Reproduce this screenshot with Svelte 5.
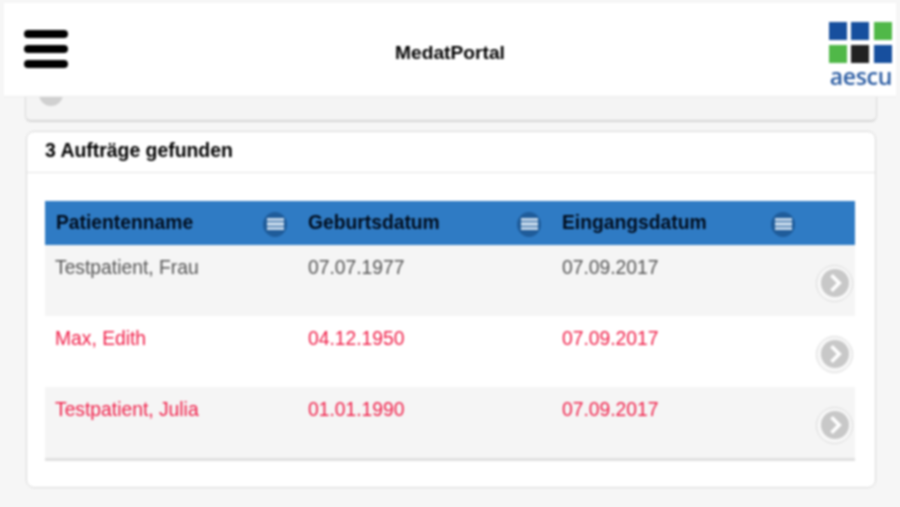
<script>
  const columns = ['Patientenname', 'Geburtsdatum', 'Eingangsdatum'];
  const orders = [
    { name: 'Testpatient, Frau', born: '07.07.1977', received: '07.09.2017', urgent: false },
    { name: 'Max, Edith', born: '04.12.1950', received: '07.09.2017', urgent: true },
    { name: 'Testpatient, Julia', born: '01.01.1990', received: '07.09.2017', urgent: true }
  ];
  const logo = ['#174f9e', '#174f9e', '#50b848', '#50b848', '#222222', '#174f9e'];
</script>

<div class="page">
  <header class="topbar">
    <div class="burger"><span></span><span></span><span></span></div>
    <h1>MedatPortal</h1>
    <div class="logo">
      <div class="squares">
        {#each logo as colour}
          <i style="background: {colour}"></i>
        {/each}
      </div>
      <span>aescu</span>
    </div>
  </header>

  <div class="content">
    <div class="search-card">
      <div class="stub"></div>
    </div>

    <section class="card">
      <h2>3 Aufträge gefunden</h2>
      <div class="card-body">
        <div class="table">
          <div class="row head">
            {#each columns as column}
              <div class="cell">
                <span>{column}</span>
                <b class="sort"><i></i><i></i><i></i></b>
              </div>
            {/each}
          </div>
          {#each orders as order, index}
            <div class="row" class:odd={index % 2 === 0} class:urgent={order.urgent}>
              <div class="cell">{order.name}</div>
              <div class="cell">{order.born}</div>
              <div class="cell">{order.received}</div>
              <div class="go">
                <svg viewBox="0 0 20 20" width="20" height="20">
                  <path d="M7.5 4.5 13 10l-5.500 5.500" fill="none" stroke="#fff" stroke-width="2.600" />
                </svg>
              </div>
            </div>
          {/each}
        </div>
      </div>
    </section>
  </div>
</div>

<style>
  :global(body) {
    margin: 0;
    background: #f6f6f6;
  }

  * {
    box-sizing: border-box;
  }

  .page {
    width: 900px;
    height: 507px;
    overflow: hidden;
    padding-top: 3px;
    font-family: "Liberation Sans", Arial, sans-serif;
    filter: blur(0.8px);
  }

  .topbar {
    position: relative;
    z-index: 1;
    height: 94px;
    margin: 0 4px;
    background: #fff;
    border-bottom: 1px solid #ececec;
    display: flex;
    align-items: center;
    justify-content: space-between;
    padding: 0 4px 0 20px;
  }

  .burger {
    width: 44px;
    display: flex;
    flex-direction: column;
    gap: 7px;
    margin-top: -2px;
  }

  .burger span {
    height: 8px;
    background: #000;
    border-radius: 4px;
  }

  h1 {
    margin: 7px 0 0 4px;
    font-size: 19.200px;
    font-weight: bold;
    color: #000;
  }

  .logo {
    width: 64px;
    margin-top: 11px;
    display: flex;
    flex-direction: column;
    align-items: flex-end;
  }

  .squares {
    display: grid;
    grid-template-columns: repeat(3, 18px);
    gap: 4.500px;
  }

  .squares i {
    height: 18px;
  }

  .logo span {
    margin-top: 2px;
    font-size: 23px;
    line-height: 23px;
    font-weight: 600;
    color: #2c5da3;
    letter-spacing: -0.3px;
    font-family: "Open Sans", sans-serif;
  }

  .content {
    padding: 0 24px 0 25px;
  }

  .search-card {
    height: 25px;
    margin-right: -1px;
    background: #f4f4f4;
    border: 1px solid #d8d8d8;
    border-top: 0;
    border-bottom: 2px solid #d6d6d6;
    border-radius: 0 0 6px 6px;
    padding-left: 13px;
    overflow: hidden;
  }

  .stub {
    width: 24px;
    height: 24px;
    margin-top: -15px;
    border-radius: 50%;
    background: #d0d0d0;
  }

  .card {
    margin: 9px 0 0 1px;
    height: 357px;
    background: #fff;
    border: 1px solid #d8d8d8;
    border-radius: 8px;
  }

  h2 {
    margin: 0;
    height: 41px;
    padding: 8px 18px 0;
    font-size: 19.400px;
    line-height: 20px;
    font-weight: bold;
    color: #000;
    border-bottom: 1px solid #e4e4e4;
  }

  .card-body {
    padding: 28px 20px 0 18px;
  }

  .table {
    border-bottom: 3px solid #e0e0e0;
  }

  .row {
    position: relative;
    height: 71px;
    display: grid;
    grid-template-columns: 253px 254px 254px 49px;
    background: #fff;
    color: #f01e48;
    font-size: 19.300px;
  }

  .row.odd {
    background: #f5f5f5;
  }

  .row:not(.urgent) {
    color: #555;
  }

  .row.head {
    height: 44px;
    background: #2f7bc4;
    color: #000c1c;
    font-weight: bold;
    align-items: center;
  }

  .cell {
    padding: 13px 0 0 10px;
    line-height: 20px;
  }

  .head .cell {
    padding: 0 0 0 10px;
    display: flex;
    align-items: center;
    justify-content: space-between;
  }

  .head .cell:first-child {
    padding-left: 11px;
  }

  .head .cell span {
    margin-top: -1px;
  }

  .sort {
    width: 24px;
    height: 25px;
    margin: 2px 11px 0 0;
    border-radius: 50%;
    background: #1f5c9a;
    display: flex;
    flex-direction: column;
    justify-content: center;
    align-items: center;
    gap: 1px;
  }

  .sort i {
    width: 17px;
    height: 3.500px;
    background: #c4d7ea;
  }

  .go {
    position: absolute;
    right: 2px;
    top: 19.500px;
    width: 37px;
    height: 37px;
    border-radius: 50%;
    background: #f8f8f8;
    border: 1.500px solid #dadada;
    display: flex;
    align-items: center;
    justify-content: center;
  }

  .go svg {
    width: 28px;
    height: 28px;
    background: #c8c8c8;
    border-radius: 50%;
  }
</style>
